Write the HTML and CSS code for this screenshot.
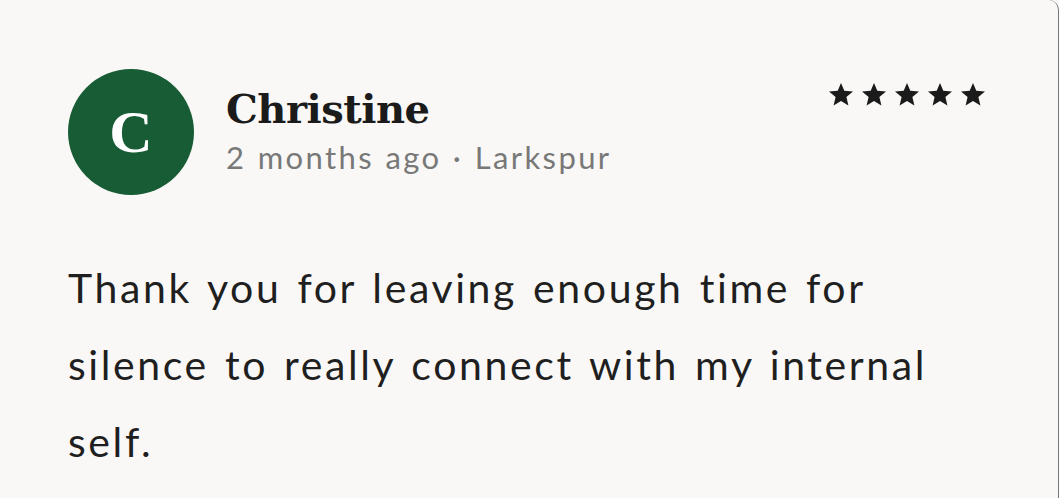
FILE: index.html
```html
<!DOCTYPE html>
<html lang="en">
<head>
<meta charset="utf-8">
<title>Review</title>
<link rel="stylesheet" href="styles.css">
</head>
<body>
<div class="card">
  <div class="header">
    <div class="author">
      <div class="avatar">C</div>
      <div class="info">
        <div class="name">Christine</div>
        <div class="meta">2 months ago · Larkspur</div>
      </div>
    </div>
    <div class="stars" aria-label="5 stars">
      <svg viewBox="0 0 24 24" class="star"><path d="M12 0l3.3 7.8 8.7 0.6-6.6 5.6 2 8.5-7.4-4.6-7.4 4.6 2-8.5L0 8.4l8.7-0.6z"/></svg>
      <svg viewBox="0 0 24 24" class="star"><path d="M12 0l3.3 7.8 8.7 0.6-6.6 5.6 2 8.5-7.4-4.6-7.4 4.6 2-8.5L0 8.4l8.7-0.6z"/></svg>
      <svg viewBox="0 0 24 24" class="star"><path d="M12 0l3.3 7.8 8.7 0.6-6.6 5.6 2 8.5-7.4-4.6-7.4 4.6 2-8.5L0 8.4l8.7-0.6z"/></svg>
      <svg viewBox="0 0 24 24" class="star"><path d="M12 0l3.3 7.8 8.7 0.6-6.6 5.6 2 8.5-7.4-4.6-7.4 4.6 2-8.5L0 8.4l8.7-0.6z"/></svg>
      <svg viewBox="0 0 24 24" class="star"><path d="M12 0l3.3 7.8 8.7 0.6-6.6 5.6 2 8.5-7.4-4.6-7.4 4.6 2-8.5L0 8.4l8.7-0.6z"/></svg>
    </div>
  </div>
  <p class="body">Thank you for leaving enough time for silence to really connect with my internal self.</p>
</div>
</body>
</html>
```

FILE: styles.css
```css
html, body {
  margin: 0;
  padding: 0;
  background: #f9f8f6;
}

.card {
  box-sizing: border-box;
  height: 498px;
  padding: 69px 73px 0 68px;
  border-right: 1px solid #777;
  background: #f9f8f6;
  border-radius: 0 10px 0 0;
  overflow: hidden;
}

.header {
  display: flex;
  justify-content: space-between;
  align-items: flex-start;
}

.author {
  display: flex;
  align-items: center;
  gap: 32px;
}

.avatar {
  width: 126px;
  height: 126px;
  border-radius: 50%;
  background: #175c35;
  color: #fff;
  display: flex;
  align-items: center;
  justify-content: center;
  font-family: "Liberation Serif", serif;
  font-weight: bold;
  font-size: 60px;
  line-height: 1;
}

.info {
  display: flex;
  flex-direction: column;
  margin-top: -2px;
}

.name {
  font-family: "DejaVu Serif", serif;
  font-weight: bold;
  font-size: 40px;
  line-height: 48px;
  color: #1b1b1b;
  letter-spacing: -0.5px;
}

.meta {
  font-family: Lato, sans-serif;
  font-size: 31px;
  line-height: 40px;
  letter-spacing: 2.4px;
  word-spacing: 1px;
  color: #787878;
  margin-top: 4px;
  font-variant-ligatures: none;
}

.stars {
  display: flex;
  gap: 9px;
  margin-top: 14px;
}

.star {
  width: 24px;
  height: 24px;
  fill: #1b1b1b;
}

.body {
  margin: 54px 0 0 0;
  width: 900px;
  font-family: Lato, sans-serif;
  font-size: 41px;
  line-height: 77px;
  letter-spacing: 2.6px;
  word-spacing: 3px;
  color: #1f1f1f;
  font-variant-ligatures: none;
}
```
